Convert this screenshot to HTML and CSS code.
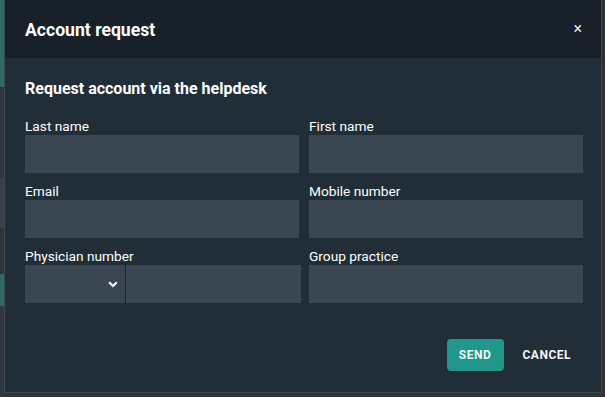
FILE: index.html
```html
<!DOCTYPE html>
<html>

<head>
  <title>Account request</title>
  <link rel="stylesheet" href="styles.css">
</head>

<body>
  <div class="screen">
    <div class="side side-left">
      <div class="strip strip-teal"></div>
      <div class="strip strip-dark"></div>
      <div class="strip strip-grey"></div>
      <div class="strip strip-dark2"></div>
      <div class="strip strip-teal2"></div>
      <div class="strip strip-dark"></div>
    </div>

    <div class="modal">
      <div class="modal-header">
        <h1>Account request</h1>
        <span class="close">&times;</span>
      </div>
      <div class="modal-body">
        <h2>Request account via the helpdesk</h2>
        <form class="form-grid">
          <div class="field">
            <label for="lastName">Last name</label>
            <input type="text" id="lastName">
          </div>
          <div class="field">
            <label for="firstName">First name</label>
            <input type="text" id="firstName">
          </div>
          <div class="field">
            <label for="email">Email</label>
            <input type="text" id="email">
          </div>
          <div class="field">
            <label for="mobile">Mobile number</label>
            <input type="text" id="mobile">
          </div>
          <div class="field">
            <label for="physician">Physician number</label>
            <div class="combo">
              <div class="select">
                <svg width="10" height="7" viewBox="0 0 10 7">
                  <path d="M1.2 1.3 L5 5 L8.8 1.3" fill="none" stroke="#ffffff" stroke-width="2.2" />
                </svg>
              </div>
              <input type="text" id="physician">
            </div>
          </div>
          <div class="field">
            <label for="practice">Group practice</label>
            <input type="text" id="practice">
          </div>
        </form>
        <div class="actions">
          <button type="button" class="btn btn-send">Send</button>
          <button type="button" class="btn btn-cancel">Cancel</button>
        </div>
      </div>
    </div>

    <div class="side side-right"></div>
  </div>
</body>

</html>
```

FILE: styles.css
```css
body {
  font-family: Roboto, "Liberation Sans", sans-serif;
  background-color: #2e3338;
  margin: 0;
  padding: 0;
}

.screen {
  display: flex;
  width: 605px;
  height: 397px;
  overflow: hidden;
}

.side {
  width: 4px;
  flex-shrink: 0;
  display: flex;
  flex-direction: column;
}

.strip-teal {
  height: 101px;
  background-color: #2f6b63;
}

.strip-dark {
  height: 106px;
  background-color: #30363b;
}

.strip-grey {
  height: 58px;
  background-color: #3b4147;
}

.strip-dark2 {
  height: 53px;
  background-color: #2f3439;
}

.strip-teal2 {
  height: 37px;
  background-color: #2f6b63;
}

.side-right {
  width: 3px;
  background-color: #2b3136;
}

/* Estilo para o modal */
.modal {
  width: 596px;
  height: 392px;
  flex-shrink: 0;
  background-color: #212d37;
  border: 1px solid #3c4a54;
  border-top: none;
}

.modal-header {
  height: 58px;
  background-color: #18202a;
  display: flex;
  align-items: center;
  justify-content: space-between;
  padding: 0 20px;
}

h1 {
  color: #ffffff;
  font-size: 17.6px;
  font-weight: 700;
  margin: 0;
  padding-top: 1px;
}

.close {
  color: #e8eaec;
  font-size: 16px;
  line-height: 1;
  margin-right: -1px;
  cursor: pointer;
}

.modal-body {
  padding: 21px 18px 0 20px;
}

h2 {
  color: #ffffff;
  font-size: 16px;
  font-weight: 700;
  margin: 0 0 20px;
  line-height: 19px;
}

.form-grid {
  display: grid;
  grid-template-columns: 274px 274px;
  column-gap: 10px;
  row-gap: 10px;
}

label {
  display: block;
  color: #ffffff;
  font-size: 13.7px;
  line-height: 16px;
  margin-bottom: 1px;
}

input[type="text"] {
  display: block;
  width: 100%;
  height: 38px;
  box-sizing: border-box;
  border: none;
  background-color: #3a4651;
  color: #ffffff;
  font-size: 14px;
  padding: 0 10px;
  margin: 0;
}

.combo {
  display: flex;
  width: 276px;
  height: 38px;
}

.select {
  width: 101px;
  height: 38px;
  flex-shrink: 0;
  background-color: #3a4651;
  border-right: 1px solid #1c262f;
  display: flex;
  align-items: center;
  justify-content: flex-end;
  padding-right: 7px;
  box-sizing: border-box;
}

.select svg {
  margin-top: 1px;
}

.combo input[type="text"] {
  flex: 1;
  width: auto;
  min-width: 0;
}

.actions {
  display: flex;
  justify-content: flex-end;
  gap: 8px;
  margin-top: 36px;
  padding-right: 0;
}

.btn {
  height: 32px;
  padding: 0 12px;
  border: none;
  border-radius: 4px;
  font-family: Roboto, "Liberation Sans", sans-serif;
  font-size: 12px;
  font-weight: 700;
  text-transform: uppercase;
  letter-spacing: 0.5px;
  color: #ffffff;
  cursor: pointer;
}

.btn-send {
  width: 57px;
  padding: 0;
  background-color: #21968a;
  color: #eef6f5;
}

.btn-cancel {
  padding: 0 12px 0 11px;
  background-color: transparent;
  color: #f2f4f5;
}
```
